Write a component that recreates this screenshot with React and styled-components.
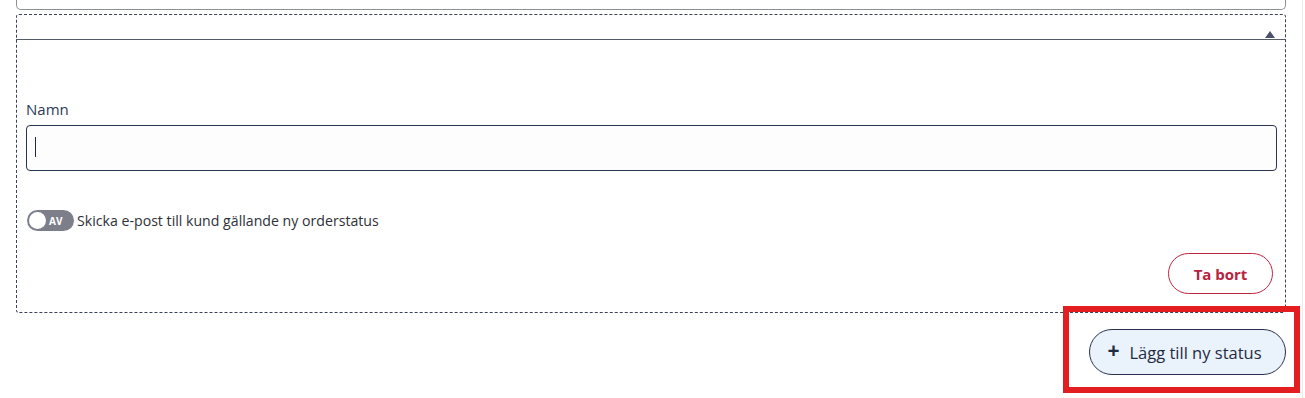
import React, { useState } from "react"
import styled, { createGlobalStyle } from "styled-components"

const GlobalStyle = createGlobalStyle`
  html, body {
    margin: 0;
    padding: 0;
    background: #ffffff;
    font-family: "Open Sans", "Noto Sans", sans-serif;
  }
`

function StatusEditor() {
  const [name, setName] = useState("")
  const [sendMail, setSendMail] = useState(false)
  return (
    <Page>
      <PrevCard />
      <StatusCard>
        <CardHeader>
          <Caret />
        </CardHeader>
        <CardBody>
          <Field>
            <Label htmlFor="status-name">Namn</Label>
            <InputWrap>
              <Input
                id="status-name"
                value={name}
                onChange={e => setName(e.target.value)}
              />
              {name === "" && <TextCursor />}
            </InputWrap>
          </Field>
          <ToggleRow>
            <Switch on={sendMail} onClick={() => setSendMail(!sendMail)}>
              <Knob on={sendMail} />
              <SwitchText>{sendMail ? "PÅ" : "AV"}</SwitchText>
            </Switch>
            <ToggleLabel>Skicka e-post till kund gällande ny orderstatus</ToggleLabel>
          </ToggleRow>
          <Actions>
            <DangerButton>Ta bort</DangerButton>
          </Actions>
        </CardBody>
      </StatusCard>
      <Footer>
        <Highlight>
          <AddButton>
            <Plus>+</Plus>
            <span>Lägg till ny status</span>
          </AddButton>
        </Highlight>
      </Footer>
      <EdgeLine />
    </Page>
  )
}

export default function App() {
  return (
    <>
      <GlobalStyle />
      <StatusEditor />
    </>
  )
}

/// styled components

const Page = styled.div`
  position: relative;
  width: 1305px;
  height: 398px;
  padding: 0 19px 0 16px;
  box-sizing: border-box;
  overflow: hidden;
`
const PrevCard = styled.div`
  height: 10px;
  box-sizing: border-box;
  border: 1px solid #8d9097;
  border-top: none;
  border-radius: 0 0 5px 5px;
`
const StatusCard = styled.div`
  margin-top: 4px;
  height: 299px;
  box-sizing: border-box;
  border: 1px dashed #3b4258;
  border-radius: 3px;
  display: flex;
  flex-direction: column;
`
const CardHeader = styled.div`
  height: 25px;
  margin: 0 -1px;
  box-sizing: border-box;
  border-bottom: 1.5px solid #545b66;
  display: flex;
  justify-content: flex-end;
  align-items: flex-end;
  padding: 0 11px 1px 0;
`
const Caret = styled.span`
  width: 0;
  height: 0;
  border-left: 5px solid transparent;
  border-right: 5px solid transparent;
  border-bottom: 7px solid #4b5268;
`
const CardBody = styled.div`
  flex: 1;
  display: flex;
  flex-direction: column;
  padding: 0 8px 0 9px;
`
const Field = styled.div`
  margin-top: 59px;
  display: flex;
  flex-direction: column;
`
const Label = styled.label`
  font-size: 15px;
  line-height: 20px;
  color: #2b3b57;
  margin-bottom: 6px;
`
const InputWrap = styled.div`
  position: relative;
`
const Input = styled.input`
  width: 100%;
  height: 46px;
  box-sizing: border-box;
  border: 1.5px solid #283450;
  border-radius: 4px;
  padding: 0 8px;
  background: #fdfdfd;
  font-family: inherit;
  font-size: 15px;
  color: #1f2a40;
  caret-color: #1f2a40;
  outline: none;
`
const TextCursor = styled.span`
  position: absolute;
  left: 9px;
  top: 12px;
  width: 1px;
  height: 20px;
  background: #1f2a40;
  pointer-events: none;
`
const ToggleRow = styled.div`
  margin-top: 39px;
  display: flex;
  align-items: center;
  gap: 3px;
`
const Switch = styled.button`
  position: relative;
  width: 47px;
  height: 21px;
  margin-left: 1px;
  border: none;
  border-radius: 11px;
  background: ${p => (p.on ? "#2b6b3f" : "#7c7f8a")};
  padding: 0;
  cursor: pointer;
  display: flex;
  align-items: center;
`
const Knob = styled.span`
  position: absolute;
  top: 2px;
  left: ${p => (p.on ? "28px" : "2px")};
  width: 17px;
  height: 17px;
  border-radius: 50%;
  background: #ffffff;
`
const SwitchText = styled.span`
  margin-left: 22px;
  font-size: 10px;
  font-weight: 700;
  color: #ffffff;
  font-family: "Open Sans", sans-serif;
`
const ToggleLabel = styled.span`
  font-size: 14.15px;
  color: #2e3138;
`
const Actions = styled.div`
  margin-top: 22px;
  display: flex;
  justify-content: flex-end;
  padding-right: 4px;
`
const DangerButton = styled.button`
  width: 105px;
  height: 41px;
  border: 1px solid #c2243f;
  border-radius: 21px;
  background: #ffffff;
  color: #b82240;
  font-family: inherit;
  font-size: 15px;
  font-weight: 700;
  cursor: pointer;
`
const Footer = styled.div`
  display: flex;
  justify-content: flex-end;
  margin-top: -7px;
  margin-right: -14px;
`
const Highlight = styled.div`
  width: 237px;
  height: 87px;
  box-sizing: border-box;
  border: 6px solid #e41e20;
  display: flex;
  justify-content: flex-end;
  align-items: flex-start;
  padding: 18px 8px 0 0;
`
const AddButton = styled.button`
  width: 197px;
  height: 46px;
  margin-top: -1px;
  border: 1px solid #2a3350;
  border-radius: 23px;
  background: #eaf2fb;
  color: #1f2b43;
  font-family: inherit;
  font-size: 16.5px;
  cursor: pointer;
  display: flex;
  align-items: center;
  justify-content: center;
  gap: 10px;
  padding: 0 6px 0 0;
`
const Plus = styled.span`
  font-size: 21px;
  font-weight: 700;
  line-height: 1;
  margin-top: -3px;
`
const EdgeLine = styled.div`
  position: absolute;
  top: 0;
  right: 2px;
  width: 1px;
  height: 100%;
  background: #ececec;
`
